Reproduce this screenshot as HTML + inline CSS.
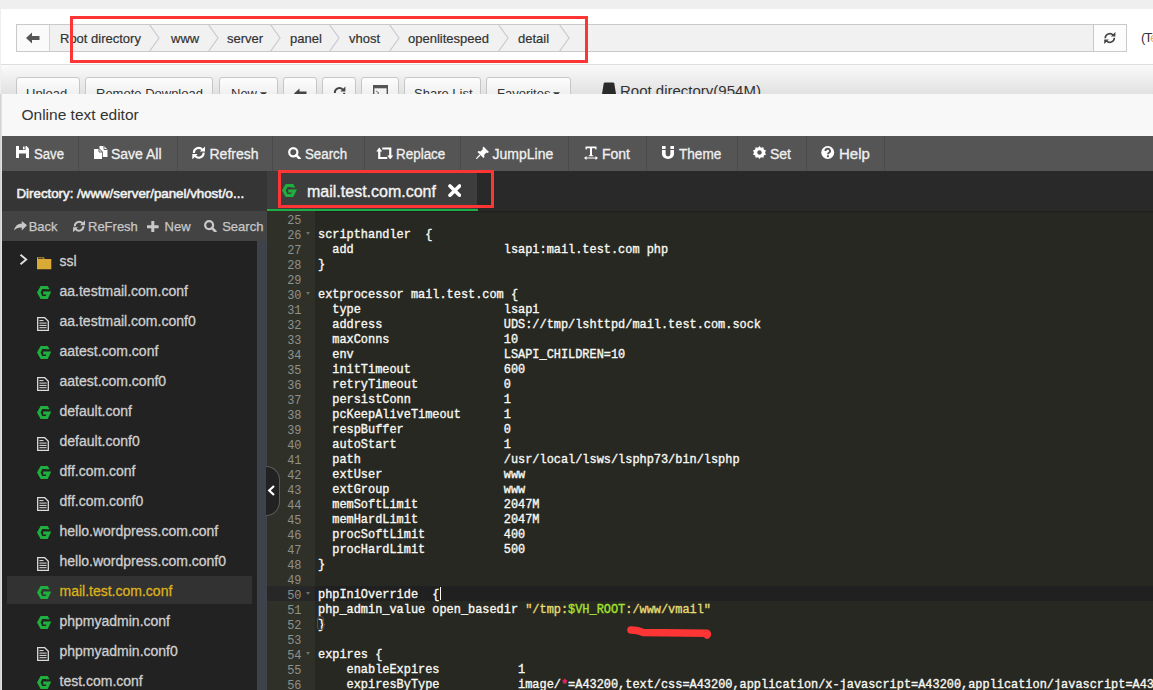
<!DOCTYPE html>
<html><head><meta charset="utf-8">
<style>
*{box-sizing:border-box;margin:0;padding:0}
html,body{width:1153px;height:690px;overflow:hidden}
body{background:#efefef;font-family:"Liberation Sans",sans-serif;position:relative}
.abs{position:absolute}
#panel{position:absolute;left:1px;top:9px;width:1152px;height:681px;background:#fff}
#crumb{position:absolute;left:16px;top:24px;width:1111px;height:28px;border:1px solid #c9c9c9;background:#f1f1f1}
#crumb .back{position:absolute;left:0;top:0;width:33px;height:26px;background:#fafafa;border-right:1px solid #d4d4d4}
#crumb .ref{position:absolute;right:0;top:0;width:33px;height:26px;background:#fcfcfc;border-left:1px solid #c9c9c9}
.ci{position:absolute;top:7px;font-size:13px;line-height:13px;color:#333;white-space:nowrap;-webkit-text-stroke:0.2px currentColor}
.chev{position:absolute;top:-1px;width:12px;height:28px}
#hline{position:absolute;left:1px;top:64px;width:1152px;height:1px;background:#ddd}
#btnrow{position:absolute;left:1px;top:65px;width:1152px;height:29px;background:linear-gradient(#fafafa,#e1e1e1)}
.btn{position:absolute;top:77px;height:30px;border:1px solid #c6c6c6;border-radius:3px;background:linear-gradient(#fdfdfd,#e6e6e6);font-size:13px;line-height:13px;color:#333;white-space:nowrap;padding-top:9px}
#dlg{position:absolute;left:2px;top:94px;width:1151px;height:596px;background:#222;overflow:hidden}
#title{position:absolute;left:0;top:0;width:1151px;height:42px;background:#f8f8f8;font-size:15.5px;line-height:16px;color:#333;padding:13px 0 0 19.5px;white-space:nowrap}
#tb{position:absolute;left:0;top:42px;width:1151px;height:35px;background:#555}
.tbt{position:absolute;top:10.5px;font-size:14px;line-height:14px;color:#f0f0f0;white-space:nowrap;-webkit-text-stroke:0.3px currentColor}
.sep{position:absolute;top:0;width:1px;height:35px;background:#4a4a4a}
#dir{position:absolute;left:0;top:77px;width:265px;height:40px;background:#353535;color:#f2f2f2;font-size:13.3px;line-height:13px;-webkit-text-stroke:0.55px currentColor;padding:16px 0 0 14.5px;white-space:nowrap}
#stb{position:absolute;left:0;top:117px;width:265px;height:30px;background:#434343}
.stt{position:absolute;top:8.5px;font-size:13px;line-height:13px;color:#c8c8c8;white-space:nowrap;-webkit-text-stroke:0.25px currentColor}
#list{position:absolute;left:0;top:147px;width:255px;height:449px;background:#222}
#sbar{position:absolute;left:255px;top:147px;width:10px;height:449px;background:#3e424b}
.row{position:absolute;left:0;width:255px;height:30px;font-size:14px;line-height:14px;color:#cfcfcf;white-space:nowrap;-webkit-text-stroke:0.3px currentColor}
.row span{position:absolute;left:57.5px;top:8px}
.row.sel{background:linear-gradient(90deg,#222 0,#222 5px,#323232 5px,#323232 250px,#222 250px)}
.row.sel{height:28px}
.row.sel span{color:#dbb11c}
#tabbar{position:absolute;left:265px;top:77px;width:886px;height:40px;background:#292929}
#tab{position:absolute;left:0;top:0;width:210px;height:38px;background:#3d3d3d}
#tabline{position:absolute;left:0;top:38px;width:211px;height:2px;background:#1fae43}
#gutter{position:absolute;left:265px;top:117px;width:48px;height:479px;background:#2f3129}
#code{position:absolute;left:313px;top:117px;width:838px;height:479px;background:#272822;overflow:hidden}
.ln{position:absolute;left:0;width:34.5px;text-align:right;font-family:"Liberation Mono",monospace;font-size:11.92px;color:#8f908a;height:15px;line-height:15px}
.cl{position:absolute;left:3px;font-family:"Liberation Mono",monospace;font-size:11.92px;color:#f8f8f2;-webkit-text-stroke:0.35px currentColor;white-space:pre;height:15px;line-height:15px}
.str{color:#e6db74}.var{color:#a6e22e}.op{color:#f92672}
.bm{}
.fold{position:absolute;left:39px;width:0;height:0;border-left:2.5px solid transparent;border-right:2.5px solid transparent;border-top:3px solid #6f716a}
#redrect{position:absolute;left:70px;top:16px;width:518px;height:47px;border:3px solid #fe3535}
#redrect2{position:absolute;left:278px;top:170px;width:216px;height:38px;border:3px solid #fe3535}
</style></head><body>
<div id="panel"></div>
<div id="crumb">
  <div class="back"><svg class="abs" style="left:9px;top:7px" width="14" height="12" viewBox="0 0 14 12"><path d="M0 6 L6 0.5 L6 4 L13.5 4 L13.5 8 L6 8 L6 11.5 Z" fill="#555"/></svg></div>
  <span class="ci" style="left:43px">Root directory</span><svg class="chev" style="left:131px" viewBox="0 0 12 28"><path d="M1 0 L11 14 L1 28" fill="none" stroke="#c9c9d2" stroke-width="1.2"/></svg><span class="ci" style="left:154px">www</span><svg class="chev" style="left:190px" viewBox="0 0 12 28"><path d="M1 0 L11 14 L1 28" fill="none" stroke="#c9c9d2" stroke-width="1.2"/></svg><span class="ci" style="left:210px">server</span><svg class="chev" style="left:252px" viewBox="0 0 12 28"><path d="M1 0 L11 14 L1 28" fill="none" stroke="#c9c9d2" stroke-width="1.2"/></svg><span class="ci" style="left:273px">panel</span><svg class="chev" style="left:311px" viewBox="0 0 12 28"><path d="M1 0 L11 14 L1 28" fill="none" stroke="#c9c9d2" stroke-width="1.2"/></svg><span class="ci" style="left:332px">vhost</span><svg class="chev" style="left:371px" viewBox="0 0 12 28"><path d="M1 0 L11 14 L1 28" fill="none" stroke="#c9c9d2" stroke-width="1.2"/></svg><span class="ci" style="left:391px">openlitespeed</span><svg class="chev" style="left:480px" viewBox="0 0 12 28"><path d="M1 0 L11 14 L1 28" fill="none" stroke="#c9c9d2" stroke-width="1.2"/></svg><span class="ci" style="left:501px">detail</span><svg class="chev" style="left:541px" viewBox="0 0 12 28"><path d="M1 0 L11 14 L1 28" fill="none" stroke="#c9c9d2" stroke-width="1.2"/></svg>
  <div class="ref"><svg class="abs" style="left:9px;top:6px" width="14" height="14" viewBox="0 0 14 14"><path d="M2.2 7.2 A4.6 4.6 0 0 1 10.2 4.2 M11.4 6.8 A4.6 4.6 0 0 1 3.4 9.8" fill="none" stroke="#444" stroke-width="1.6"/><path d="M7.8 5.6 H12.4 V1 Z M5.8 8.4 H1.2 V13 Z" fill="#444"/></svg></div>
</div>
<span class="abs" style="left:1141px;top:30.5px;font-size:13px;line-height:13px;color:#333;letter-spacing:-0.8px;white-space:nowrap">(T<span style="color:#f0ad4e">e</span></span>
<div id="hline"></div>
<div id="btnrow"></div>
<div class="btn" style="left:16px;width:64px;padding-left:9px">Upload</div>
<div class="btn" style="left:85px;width:128px;padding-left:10px">Remote Download</div>
<div class="btn" style="left:219px;width:59px;padding-left:11px">New<svg class="abs" style="left:39.5px;top:14px" width="7" height="4" viewBox="0 0 8 4"><path d="M0 0 H8 L4 4 Z" fill="#333"/></svg></div>
<div class="btn" style="left:283px;width:34px"><svg class="abs" style="left:10px;top:9.5px" width="13" height="11" viewBox="0 0 13 11"><path d="M0 5.5 L5.5 0.5 V3.5 H12.5 V7.5 H5.5 V10.5 Z" fill="#444"/></svg></div>
<div class="btn" style="left:322px;width:34px"><svg class="abs" style="left:10px;top:8px" width="13" height="13" viewBox="0 0 13 13"><path d="M1.8 7 A4.6 4.6 0 0 1 9.8 3.6" fill="none" stroke="#444" stroke-width="1.9"/><path d="M7.4 5.4 H12.4 V0.4 Z" fill="#444"/><path d="M11.2 6.8 A4.6 4.6 0 0 1 3.2 10.2" fill="none" stroke="#444" stroke-width="1.9"/></svg></div>
<div class="btn" style="left:361px;width:38px"><svg class="abs" style="left:11px;top:7px" width="15" height="14" viewBox="0 0 15 14"><rect x="0.7" y="0.7" width="13.6" height="12.6" fill="none" stroke="#555" stroke-width="1.4"/><rect x="0.7" y="0.7" width="13.6" height="2.6" fill="#555"/><path d="M3 6 L6 8 L3 10 M6.5 11 H11" fill="none" stroke="#777" stroke-width="1"/></svg></div>
<div class="btn" style="left:404px;width:77px;padding-left:9px">Share List</div>
<div class="btn" style="left:486px;width:85px;padding-left:10px">Favorites<svg class="abs" style="left:65.5px;top:14px" width="7" height="4" viewBox="0 0 8 4"><path d="M0 0 H8 L4 4 Z" fill="#333"/></svg></div>
<svg class="abs" style="left:602px;top:82px" width="14" height="12" viewBox="0 0 14 12"><path d="M3 0.5 H11 Q12 0.5 12.3 1.5 L14 12 H0 L1.7 1.5 Q2 0.5 3 0.5 Z" fill="#2a2a2a"/></svg>
<span class="abs" style="left:620px;top:82px;font-size:15px;color:#333;white-space:nowrap">Root directory(954M)</span>
<div id="redrect"></div>
<div class="abs" style="left:0;top:94px;width:2px;height:596px;background:linear-gradient(90deg,#d4d4d4 0,#d4d4d4 1px,#e2e2e2 1px)"></div>

<div id="dlg">
  <div id="title">Online text editor</div>
  <div id="tb"><svg class="abs" style="left:14px;top:10.199999999999989px" width="13" height="12" viewBox="0 0 13 12"><path d="M0 0 H10.5 L13 2.5 V12 H0 Z" fill="#fff"/><rect x="3" y="0" width="6.5" height="4" fill="#555"/><rect x="7" y="0.6" width="1.6" height="2.8" fill="#fff"/><rect x="3" y="7.5" width="7" height="4.5" fill="#555"/></svg><span class="tbt" style="left:31.799999999999997px;transform:scaleX(0.94);transform-origin:0 0">Save</span><div class="sep" style="left:76px"></div><svg class="abs" style="left:92px;top:10px" width="14" height="13" viewBox="0 0 14 13"><path d="M0 3 H5 L8 6 V13 H0 Z" fill="#fff"/><path d="M5.5 0 H10 L13.5 3.5 V11 H8.8 V5.8 L5.5 2.5 Z" fill="#fff"/><path d="M5 3 V6 H8" fill="none" stroke="#555" stroke-width="0.9"/><path d="M10 0 V3.5 H13.5" fill="none" stroke="#555" stroke-width="0.9"/></svg><span class="tbt" style="left:109px;transform:scaleX(1);transform-origin:0 0">Save All</span><div class="sep" style="left:175px"></div><svg class="abs" style="left:190px;top:9.800000000000011px" width="13" height="13.5" viewBox="0 0 13 13.5"><path d="M1.9 7 A4.8 4.8 0 0 1 10.3 3.6 M11.6 6.6 A4.8 4.8 0 0 1 3.2 10" fill="none" stroke="#fff" stroke-width="2.1"/><path d="M7.8 5.6 H13.2 V0.2 Z M5.7 8 H0.3 V13.4 Z" fill="#fff"/></svg><span class="tbt" style="left:207.5px;transform:scaleX(1);transform-origin:0 0">Refresh</span><div class="sep" style="left:270px"></div><svg class="abs" style="left:285.5px;top:10.5px" width="13.5" height="12.5" viewBox="0 0 13.5 12.5"><circle cx="5.3" cy="5.3" r="4.1" fill="none" stroke="#fff" stroke-width="2.2"/><path d="M8.2 8.2 L12.3 12.3" stroke="#fff" stroke-width="2.6" stroke-linecap="round"/></svg><span class="tbt" style="left:303px;transform:scaleX(0.95);transform-origin:0 0">Search</span><div class="sep" style="left:362px"></div><svg class="abs" style="left:374px;top:10.5px" width="17.5" height="12.5" viewBox="0 0 17 12.5"><path d="M3 3 V11 H11" fill="none" stroke="#fff" stroke-width="2.2"/><path d="M0 4.5 L3 0.5 L6 4.5 Z" fill="#fff"/><path d="M6 1.5 H14 V9.5" fill="none" stroke="#fff" stroke-width="2.2"/><path d="M11 8.5 L14 12.5 L17 8.5 Z" fill="#fff"/></svg><span class="tbt" style="left:394px;transform:scaleX(0.96);transform-origin:0 0">Replace</span><div class="sep" style="left:458px"></div><svg class="abs" style="left:474px;top:9.800000000000011px" width="13.5" height="13.5" viewBox="0 0 13.5 13.5"><path d="M7.5 0.5 L13 6 L11.5 7 L10.5 6.5 L8 9 L8.5 11 L7.5 12 L1.5 6 L2.5 5 L4.5 5.5 L7 3 L6.5 2 Z" fill="#fff"/><path d="M4 9 L0.3 12.7" stroke="#fff" stroke-width="1.2"/></svg><span class="tbt" style="left:490.5px;transform:scaleX(1);transform-origin:0 0">JumpLine</span><div class="sep" style="left:566px"></div><svg class="abs" style="left:582px;top:10px" width="14" height="14" viewBox="0 0 14 14"><path d="M1.5 0.5 H12.5 V3.5 H11.5 L11 2.2 H8 V9.2 H9.2 V10.3 H4.8 V9.2 H6 V2.2 H3 L2.5 3.5 H1.5 Z" fill="#fff"/><path d="M1 12 H13" stroke="#fff" stroke-width="1"/><path d="M0 12 L2.5 10 V14 Z M14 12 L11.5 10 V14 Z" fill="#fff"/></svg><span class="tbt" style="left:600px;transform:scaleX(1);transform-origin:0 0">Font</span><div class="sep" style="left:644px"></div><svg class="abs" style="left:660px;top:10.199999999999989px" width="12" height="13" viewBox="0 0 12 13"><path d="M0 4 H3.6 V8 A2.4 2.4 0 0 0 8.4 8 V4 H12 V8 A6 5 0 0 1 0 8 Z" fill="#fff"/><rect x="0" y="0" width="3.6" height="3" fill="#fff"/><rect x="8.4" y="0" width="3.6" height="3" fill="#fff"/></svg><span class="tbt" style="left:677px;transform:scaleX(0.97);transform-origin:0 0">Theme</span><div class="sep" style="left:735px"></div><svg class="abs" style="left:750.8px;top:10px" width="13" height="13" viewBox="0 0 13 13"><path d="M6.5 0 L8 1.8 L10.4 1.3 L10.8 3.6 L13 4.6 L12 6.5 L13 8.4 L10.8 9.4 L10.4 11.7 L8 11.2 L6.5 13 L5 11.2 L2.6 11.7 L2.2 9.4 L0 8.4 L1 6.5 L0 4.6 L2.2 3.6 L2.6 1.3 L5 1.8 Z" fill="#fff"/><circle cx="6.5" cy="6.5" r="2.2" fill="#555"/></svg><span class="tbt" style="left:768px;transform:scaleX(1);transform-origin:0 0">Set</span><div class="sep" style="left:804px"></div><svg class="abs" style="left:819px;top:10px" width="13.5" height="13" viewBox="0 0 13.4 13"><circle cx="6.7" cy="6.5" r="6.5" fill="#fff"/><path d="M4.4 5 A2.3 2.2 0 1 1 7.9 6.8 Q6.9 7.4 6.9 8.3" fill="none" stroke="#555" stroke-width="1.9"/><rect x="5.9" y="9.3" width="2" height="1.9" fill="#555"/></svg><span class="tbt" style="left:836.8px;transform:scaleX(1.07);transform-origin:0 0">Help</span><div class="sep" style="left:882px"></div></div>
  <div id="dir">Directory: /www/server/panel/vhost/o...</div>
  <div id="stb"><svg class="abs" style="left:12px;top:9.800000000000011px" width="13" height="10" viewBox="0 0 13 10"><path d="M13 4.2 L7.8 0 V2.6 Q1.6 2.8 0 9.6 Q2.6 6.4 7.8 6.6 V9.4 Z" fill="#c8c8c8"/></svg><span class="stt" style="left:26.7px">Back</span><svg class="abs" style="left:71px;top:9px" width="12" height="12.5" viewBox="0 0 12 12.5"><path d="M1.8 6.4 A4.4 4.4 0 0 1 9.5 3.3 M10.4 6.1 A4.4 4.4 0 0 1 2.7 9.2" fill="none" stroke="#c8c8c8" stroke-width="1.9"/><path d="M7.1 5.2 H12 V0.3 Z M5 7.3 H0.1 V12.2 Z" fill="#c8c8c8"/></svg><span class="stt" style="left:86px">ReFresh</span><svg class="abs" style="left:145px;top:9.599999999999994px" width="11.6" height="11.6" viewBox="0 0 11.6 11.6"><path d="M4.3 0 H7.3 V4.3 H11.6 V7.3 H7.3 V11.6 H4.3 V7.3 H0 V4.3 H4.3 Z" fill="#c8c8c8"/></svg><span class="stt" style="left:162.6px">New</span><svg class="abs" style="left:202px;top:8.800000000000011px" width="12.5" height="12.5" viewBox="0 0 12.5 12.5"><circle cx="5.1" cy="5.1" r="4" fill="none" stroke="#c8c8c8" stroke-width="2.2"/><path d="M8 8 L11.4 11.4" stroke="#c8c8c8" stroke-width="2.6" stroke-linecap="round"/></svg><span class="stt" style="left:220.2px">Search</span></div>
  <div id="list"><div class="row" style="top:5px"><svg class="abs" style="left:17px;top:7.5px" width="9" height="11" viewBox="0 0 9 11"><path d="M1.5 0.8 L7.2 5.5 L1.5 10.2" fill="none" stroke="#e0e0e0" stroke-width="1.9"/></svg><svg class="abs" style="left:35px;top:11px" width="14.5" height="12.5" viewBox="0 0 14.5 12.5"><path d="M0 0.3 H7 L7.6 2 H14.3 V12.3 H0 Z" fill="#d9ab36"/><path d="M1 1.3 H6.5" stroke="#222" stroke-width="0.9"/></svg><span>ssl</span></div><div class="row" style="top:35px"><svg class="abs" style="left:35px;top:10px" width="14.3" height="13" viewBox="0 0 14.3 13"><path d="M3.6 0 H10.7 L12.6 3.3 H9.1 L8.6 2.9 H5.3 L3.6 6.5 L5.3 10.1 H8.6 L9.5 8.5 H6.2 V5.4 H14.3 L10.7 13 H3.6 L0 6.5 Z" fill="#1faf3d"/></svg><span>aa.testmail.com.conf</span></div><div class="row" style="top:65px"><svg class="abs" style="left:35px;top:11px" width="12" height="14" viewBox="0 0 12 14"><path d="M0.7 0.7 H7.7 L11.3 4.3 V13.3 H0.7 Z" fill="none" stroke="#dcdcdc" stroke-width="1.3"/><path d="M2.4 3.6 H6.6 M2.4 6.1 H9.6 M2.4 8.4 H9.6 M2.4 10.7 H9.6" stroke="#e0e0e0" stroke-width="1"/></svg><span>aa.testmail.com.conf0</span></div><div class="row" style="top:95px"><svg class="abs" style="left:35px;top:10px" width="14.3" height="13" viewBox="0 0 14.3 13"><path d="M3.6 0 H10.7 L12.6 3.3 H9.1 L8.6 2.9 H5.3 L3.6 6.5 L5.3 10.1 H8.6 L9.5 8.5 H6.2 V5.4 H14.3 L10.7 13 H3.6 L0 6.5 Z" fill="#1faf3d"/></svg><span>aatest.com.conf</span></div><div class="row" style="top:125px"><svg class="abs" style="left:35px;top:11px" width="12" height="14" viewBox="0 0 12 14"><path d="M0.7 0.7 H7.7 L11.3 4.3 V13.3 H0.7 Z" fill="none" stroke="#dcdcdc" stroke-width="1.3"/><path d="M2.4 3.6 H6.6 M2.4 6.1 H9.6 M2.4 8.4 H9.6 M2.4 10.7 H9.6" stroke="#e0e0e0" stroke-width="1"/></svg><span>aatest.com.conf0</span></div><div class="row" style="top:155px"><svg class="abs" style="left:35px;top:10px" width="14.3" height="13" viewBox="0 0 14.3 13"><path d="M3.6 0 H10.7 L12.6 3.3 H9.1 L8.6 2.9 H5.3 L3.6 6.5 L5.3 10.1 H8.6 L9.5 8.5 H6.2 V5.4 H14.3 L10.7 13 H3.6 L0 6.5 Z" fill="#1faf3d"/></svg><span>default.conf</span></div><div class="row" style="top:185px"><svg class="abs" style="left:35px;top:11px" width="12" height="14" viewBox="0 0 12 14"><path d="M0.7 0.7 H7.7 L11.3 4.3 V13.3 H0.7 Z" fill="none" stroke="#dcdcdc" stroke-width="1.3"/><path d="M2.4 3.6 H6.6 M2.4 6.1 H9.6 M2.4 8.4 H9.6 M2.4 10.7 H9.6" stroke="#e0e0e0" stroke-width="1"/></svg><span>default.conf0</span></div><div class="row" style="top:215px"><svg class="abs" style="left:35px;top:10px" width="14.3" height="13" viewBox="0 0 14.3 13"><path d="M3.6 0 H10.7 L12.6 3.3 H9.1 L8.6 2.9 H5.3 L3.6 6.5 L5.3 10.1 H8.6 L9.5 8.5 H6.2 V5.4 H14.3 L10.7 13 H3.6 L0 6.5 Z" fill="#1faf3d"/></svg><span>dff.com.conf</span></div><div class="row" style="top:245px"><svg class="abs" style="left:35px;top:11px" width="12" height="14" viewBox="0 0 12 14"><path d="M0.7 0.7 H7.7 L11.3 4.3 V13.3 H0.7 Z" fill="none" stroke="#dcdcdc" stroke-width="1.3"/><path d="M2.4 3.6 H6.6 M2.4 6.1 H9.6 M2.4 8.4 H9.6 M2.4 10.7 H9.6" stroke="#e0e0e0" stroke-width="1"/></svg><span>dff.com.conf0</span></div><div class="row" style="top:275px"><svg class="abs" style="left:35px;top:10px" width="14.3" height="13" viewBox="0 0 14.3 13"><path d="M3.6 0 H10.7 L12.6 3.3 H9.1 L8.6 2.9 H5.3 L3.6 6.5 L5.3 10.1 H8.6 L9.5 8.5 H6.2 V5.4 H14.3 L10.7 13 H3.6 L0 6.5 Z" fill="#1faf3d"/></svg><span>hello.wordpress.com.conf</span></div><div class="row" style="top:305px"><svg class="abs" style="left:35px;top:11px" width="12" height="14" viewBox="0 0 12 14"><path d="M0.7 0.7 H7.7 L11.3 4.3 V13.3 H0.7 Z" fill="none" stroke="#dcdcdc" stroke-width="1.3"/><path d="M2.4 3.6 H6.6 M2.4 6.1 H9.6 M2.4 8.4 H9.6 M2.4 10.7 H9.6" stroke="#e0e0e0" stroke-width="1"/></svg><span>hello.wordpress.com.conf0</span></div><div class="row sel" style="top:335px"><svg class="abs" style="left:35px;top:10px" width="14.3" height="13" viewBox="0 0 14.3 13"><path d="M3.6 0 H10.7 L12.6 3.3 H9.1 L8.6 2.9 H5.3 L3.6 6.5 L5.3 10.1 H8.6 L9.5 8.5 H6.2 V5.4 H14.3 L10.7 13 H3.6 L0 6.5 Z" fill="#1faf3d"/></svg><span>mail.test.com.conf</span></div><div class="row" style="top:365px"><svg class="abs" style="left:35px;top:10px" width="14.3" height="13" viewBox="0 0 14.3 13"><path d="M3.6 0 H10.7 L12.6 3.3 H9.1 L8.6 2.9 H5.3 L3.6 6.5 L5.3 10.1 H8.6 L9.5 8.5 H6.2 V5.4 H14.3 L10.7 13 H3.6 L0 6.5 Z" fill="#1faf3d"/></svg><span>phpmyadmin.conf</span></div><div class="row" style="top:395px"><svg class="abs" style="left:35px;top:11px" width="12" height="14" viewBox="0 0 12 14"><path d="M0.7 0.7 H7.7 L11.3 4.3 V13.3 H0.7 Z" fill="none" stroke="#dcdcdc" stroke-width="1.3"/><path d="M2.4 3.6 H6.6 M2.4 6.1 H9.6 M2.4 8.4 H9.6 M2.4 10.7 H9.6" stroke="#e0e0e0" stroke-width="1"/></svg><span>phpmyadmin.conf0</span></div><div class="row" style="top:425px"><svg class="abs" style="left:35px;top:10px" width="14.3" height="13" viewBox="0 0 14.3 13"><path d="M3.6 0 H10.7 L12.6 3.3 H9.1 L8.6 2.9 H5.3 L3.6 6.5 L5.3 10.1 H8.6 L9.5 8.5 H6.2 V5.4 H14.3 L10.7 13 H3.6 L0 6.5 Z" fill="#1faf3d"/></svg><span>test.com.conf</span></div></div>
  <div id="sbar"></div>
  <div id="tabbar"><div id="tab">
  <svg class="abs" style="left:14.5px;top:12.8px" width="15" height="13" viewBox="0 0 15 13"><path d="M3.7 0 H11.2 L13.2 3.4 H9.5 L9 3 H5.5 L3.7 6.5 L5.5 10 H9 L9.9 8.6 H6.2 V5.6 H15 L11.2 13 H3.7 L0 6.5 Z" fill="#1faf3d"/></svg>
  <span class="abs" style="left:40px;top:12.5px;font-size:16px;line-height:16px;color:#f4f4f4;white-space:nowrap;-webkit-text-stroke:0.35px currentColor">mail.test.com.conf</span>
  <svg class="abs" style="left:180.8px;top:12.8px" width="13.5" height="13.2" viewBox="0 0 13.5 13.2"><path d="M2 2 L11.5 11.2 M11.5 2 L2 11.2" stroke="#fff" stroke-width="3.6" stroke-linecap="round"/></svg>
 </div><div id="tabline"></div></div>
  <div id="gutter"><div class="abs" style="left:0;top:375px;width:48px;height:15px;background:#272727"></div><div class="ln" style="top:2.5px">25</div><div class="ln" style="top:17.5px">26</div><div class="fold" style="top:21px"></div><div class="ln" style="top:32.5px">27</div><div class="ln" style="top:47.5px">28</div><div class="ln" style="top:62.5px">29</div><div class="ln" style="top:77.5px">30</div><div class="fold" style="top:81px"></div><div class="ln" style="top:92.5px">31</div><div class="ln" style="top:107.5px">32</div><div class="ln" style="top:122.5px">33</div><div class="ln" style="top:137.5px">34</div><div class="ln" style="top:152.5px">35</div><div class="ln" style="top:167.5px">36</div><div class="ln" style="top:182.5px">37</div><div class="ln" style="top:197.5px">38</div><div class="ln" style="top:212.5px">39</div><div class="ln" style="top:227.5px">40</div><div class="ln" style="top:242.5px">41</div><div class="ln" style="top:257.5px">42</div><div class="ln" style="top:272.5px">43</div><div class="ln" style="top:287.5px">44</div><div class="ln" style="top:302.5px">45</div><div class="ln" style="top:317.5px">46</div><div class="ln" style="top:332.5px">47</div><div class="ln" style="top:347.5px">48</div><div class="ln" style="top:362.5px">49</div><div class="ln" style="top:377.5px">50</div><div class="fold" style="top:381px"></div><div class="ln" style="top:392.5px">51</div><div class="ln" style="top:407.5px">52</div><div class="ln" style="top:422.5px">53</div><div class="ln" style="top:437.5px">54</div><div class="fold" style="top:441px"></div><div class="ln" style="top:452.5px">55</div><div class="ln" style="top:467.5px">56</div></div>
  <div id="code"><div class="abs" style="left:0;top:375px;width:838px;height:15px;background:#202020"></div><div class="abs" style="left:124.5px;top:376px;width:1px;height:13px;background:#f8f8f0"></div><div class="cl" style="top:1.5px"></div><div class="cl" style="top:16.5px">scripthandler  {</div><div class="cl" style="top:31.5px">  add                     lsapi:mail.test.com php</div><div class="cl" style="top:46.5px">}</div><div class="cl" style="top:61.5px"></div><div class="cl" style="top:76.5px">extprocessor mail.test.com {</div><div class="cl" style="top:91.5px">  type                    lsapi</div><div class="cl" style="top:106.5px">  address                 UDS://tmp/lshttpd/mail.test.com.sock</div><div class="cl" style="top:121.5px">  maxConns                10</div><div class="cl" style="top:136.5px">  env                     LSAPI_CHILDREN=10</div><div class="cl" style="top:151.5px">  initTimeout             600</div><div class="cl" style="top:166.5px">  retryTimeout            0</div><div class="cl" style="top:181.5px">  persistConn             1</div><div class="cl" style="top:196.5px">  pcKeepAliveTimeout      1</div><div class="cl" style="top:211.5px">  respBuffer              0</div><div class="cl" style="top:226.5px">  autoStart               1</div><div class="cl" style="top:241.5px">  path                    /usr/local/lsws/lsphp73/bin/lsphp</div><div class="cl" style="top:256.5px">  extUser                 www</div><div class="cl" style="top:271.5px">  extGroup                www</div><div class="cl" style="top:286.5px">  memSoftLimit            2047M</div><div class="cl" style="top:301.5px">  memHardLimit            2047M</div><div class="cl" style="top:316.5px">  procSoftLimit           400</div><div class="cl" style="top:331.5px">  procHardLimit           500</div><div class="cl" style="top:346.5px">}</div><div class="cl" style="top:361.5px"></div><div class="cl" style="top:376.5px">phpIniOverride  {</div><div class="cl" style="top:391.5px">php_admin_value open_basedir <span class="str">"/tmp:</span><span class="var">$VH_ROOT</span><span class="str">:/www/vmail"</span></div><div class="cl" style="top:406.5px"><span class="bm">}</span></div><div class="cl" style="top:421.5px"></div><div class="cl" style="top:436.5px">expires {</div><div class="cl" style="top:451.5px">    enableExpires           1</div><div class="cl" style="top:466.5px">    expiresByType           image/<span class="op">*</span>=A43200,text/css=A43200,application/x-javascript=A43200,application/javascript=A43200,text/javascript=A43200</div><div class="abs" style="left:2px;top:405px;width:7px;height:14px;border:1px solid #4e4f48;border-radius:3px"></div><div class="abs" style="left:0;top:0;width:838px;height:2px;background:linear-gradient(rgba(0,0,0,0.25),rgba(0,0,0,0))"></div></div>
  <div class="abs" style="left:264px;top:372px;width:14px;height:50px;background:#222;border:1px solid #5a5a5a;border-left:none;border-radius:0 14px 14px 0"></div>
  <svg class="abs" style="left:264.8px;top:391.4px" width="9" height="11" viewBox="0 0 9 11"><path d="M7 1 L2.2 5.5 L7 10" fill="none" stroke="#fff" stroke-width="2.2"/></svg>
</div>
<div id="redrect2"></div>
<svg class="abs" style="left:0;top:0" width="1153" height="690"><path d="M631 630 Q638 630 643 632.5 L707 633.3 Q708 634.2 707 635" fill="none" stroke="#fe3535" stroke-width="7.5" stroke-linecap="round" stroke-linejoin="round"/></svg>
</body></html>
